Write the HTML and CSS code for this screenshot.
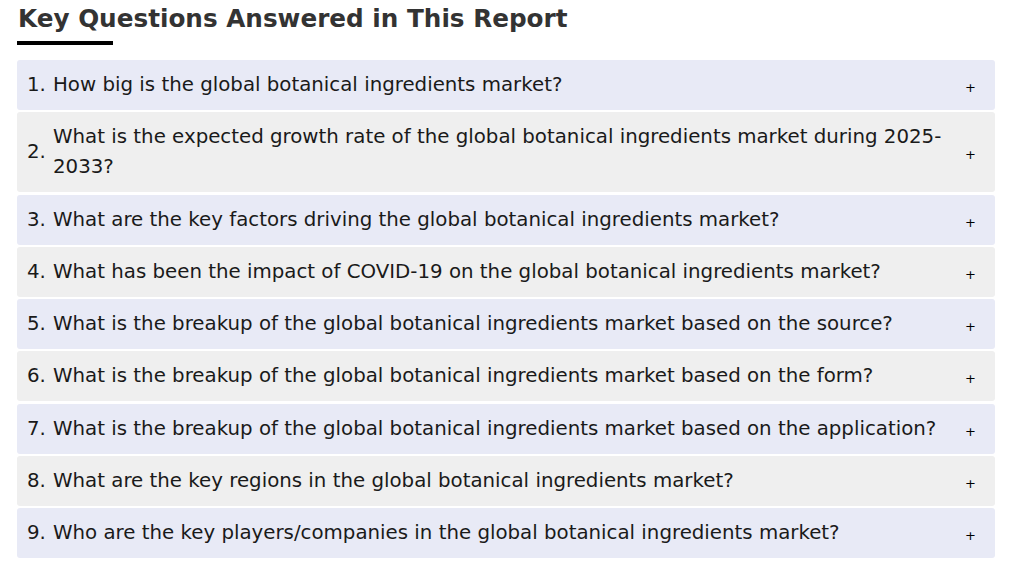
FILE: index.html
```html
<!DOCTYPE html>
<html>
<head>
<meta charset="utf-8">
<link rel="stylesheet" href="styles.css">
</head>
<body>
<section class="faq">
  <h2 class="faq-title">Key Questions Answered in This Report</h2>
  <div class="faq-bar"></div>
  <div class="faq-list">
    <div class="faq-item alt-a"><span class="num">1.</span><span class="q">How big is the global botanical ingredients market?</span><span class="plus">+</span></div>
    <div class="faq-item alt-b"><span class="num">2.</span><span class="q">What is the expected growth rate of the global botanical ingredients market during 2025-2033?</span><span class="plus">+</span></div>
    <div class="faq-item alt-a"><span class="num">3.</span><span class="q">What are the key factors driving the global botanical ingredients market?</span><span class="plus">+</span></div>
    <div class="faq-item alt-b"><span class="num">4.</span><span class="q">What has been the impact of COVID-19 on the global botanical ingredients market?</span><span class="plus">+</span></div>
    <div class="faq-item alt-a"><span class="num">5.</span><span class="q">What is the breakup of the global botanical ingredients market based on the source?</span><span class="plus">+</span></div>
    <div class="faq-item alt-b"><span class="num">6.</span><span class="q">What is the breakup of the global botanical ingredients market based on the form?</span><span class="plus">+</span></div>
    <div class="faq-item alt-a"><span class="num">7.</span><span class="q">What is the breakup of the global botanical ingredients market based on the application?</span><span class="plus">+</span></div>
    <div class="faq-item alt-b"><span class="num">8.</span><span class="q">What are the key regions in the global botanical ingredients market?</span><span class="plus">+</span></div>
    <div class="faq-item alt-a"><span class="num">9.</span><span class="q">Who are the key players/companies in the global botanical ingredients market?</span><span class="plus">+</span></div>
  </div>
</section>
</body>
</html>
```
FILE: styles.css
```css
html, body {
  margin: 0;
  padding: 0;
  background: #ffffff;
}
body {
  font-family: "DejaVu Sans", Verdana, sans-serif;
  color: #1a1a1a;
}
.faq {
  width: 978px;
  margin-left: 17px;
  padding-top: 3px;
}
.faq-title {
  margin: 0 0 0 1px;
  font-size: 24.7px;
  line-height: 32px;
  font-weight: bold;
  color: #333333;
}
.faq-bar {
  width: 96px;
  height: 4px;
  background: #000000;
  margin-top: 6px;
  margin-bottom: 15px;
}
.faq-list {
  display: flex;
  flex-direction: column;
  gap: 2.25px;
}
.faq-item {
  display: flex;
  align-items: center;
  padding: 10px 0 10px 10px;
  font-size: 19.8px;
  line-height: 30px;
  border-radius: 3px;
}
.alt-a { background: #e8eaf6; }
.alt-b { background: #efefef; }
.num {
  flex: none;
  width: 26px;
}
.q {
  flex: 1;
  padding-right: 14px;
}
.plus {
  flex: none;
  width: 30px;
  font-size: 13px;
  line-height: 12px;
  padding-top: 6px;
  color: #000;
}
```
